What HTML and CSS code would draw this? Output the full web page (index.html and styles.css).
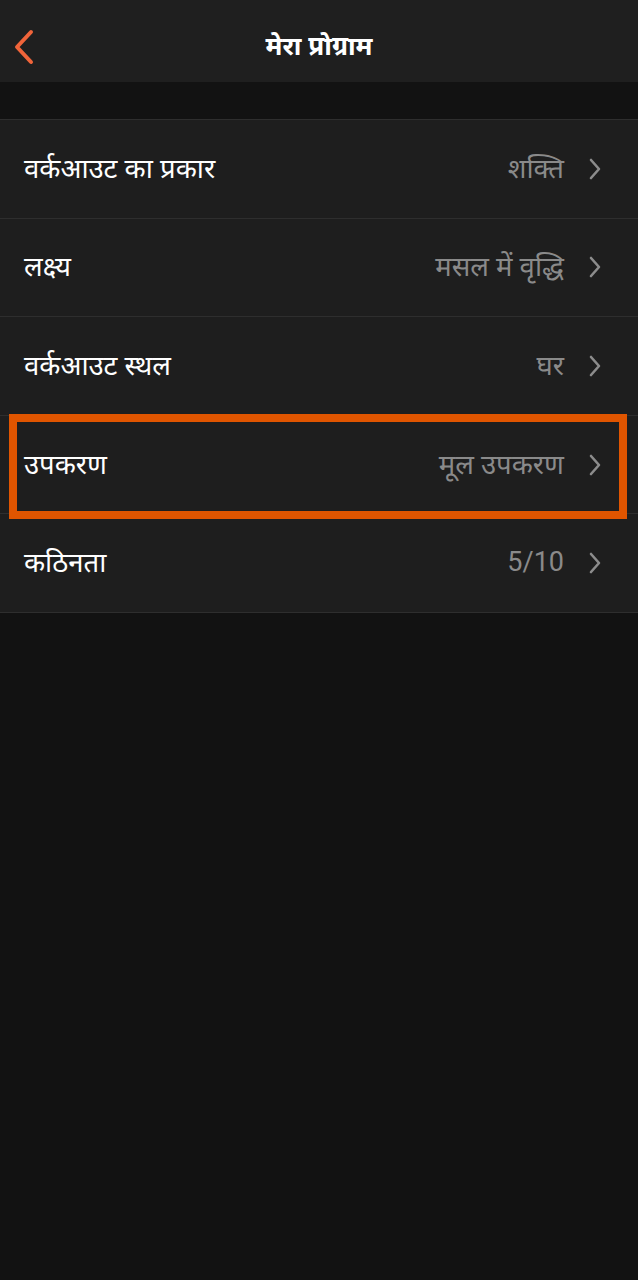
FILE: index.html
```html
<!DOCTYPE html>
<html lang="hi">
<head>
<meta charset="utf-8">
<link rel="stylesheet" href="styles.css">
</head>
<body>
<div class="screen">
  <header class="topbar">
    <span class="back">
      <svg width="22" height="36" viewBox="0 0 22 36"><path d="M18 3 L4 18 L18 33" fill="none" stroke="#f0643a" stroke-width="4" stroke-linecap="round" stroke-linejoin="round"/></svg>
    </span>
    <h1 class="title">मेरा प्रोग्राम</h1>
  </header>
  <div class="spacer"></div>
  <ul class="list">
    <li class="row"><span class="label">वर्कआउट का प्रकार</span><span class="value">शक्ति</span><span class="chev"><svg width="14" height="24" viewBox="0 0 14 24"><path d="M3 3 L11 12 L3 21" fill="none" stroke="#8c8c8c" stroke-width="2.6" stroke-linecap="round" stroke-linejoin="round"/></svg></span></li>
    <li class="row"><span class="label">लक्ष्य</span><span class="value">मसल में वृद्धि</span><span class="chev"><svg width="14" height="24" viewBox="0 0 14 24"><path d="M3 3 L11 12 L3 21" fill="none" stroke="#8c8c8c" stroke-width="2.6" stroke-linecap="round" stroke-linejoin="round"/></svg></span></li>
    <li class="row"><span class="label">वर्कआउट स्थल</span><span class="value">घर</span><span class="chev"><svg width="14" height="24" viewBox="0 0 14 24"><path d="M3 3 L11 12 L3 21" fill="none" stroke="#8c8c8c" stroke-width="2.6" stroke-linecap="round" stroke-linejoin="round"/></svg></span></li>
    <li class="row highlighted"><span class="label">उपकरण</span><span class="value">मूल उपकरण</span><span class="chev"><svg width="14" height="24" viewBox="0 0 14 24"><path d="M3 3 L11 12 L3 21" fill="none" stroke="#8c8c8c" stroke-width="2.6" stroke-linecap="round" stroke-linejoin="round"/></svg></span></li>
    <li class="row"><span class="label">कठिनता</span><span class="value num">5/10</span><span class="chev"><svg width="14" height="24" viewBox="0 0 14 24"><path d="M3 3 L11 12 L3 21" fill="none" stroke="#8c8c8c" stroke-width="2.6" stroke-linecap="round" stroke-linejoin="round"/></svg></span></li>
  </ul>
</div>
</body>
</html>
```

FILE: styles.css
```css
* { box-sizing: border-box; }
html, body { margin: 0; padding: 0; background: #121212; }
body { font-family: "Noto Sans", "Noto Sans Devanagari", "Lohit Devanagari", sans-serif; color: #fff; }
.screen { width: 638px; min-height: 1280px; background: #121212; }
.topbar {
  height: 82px;
  padding-top: 8px;
  background: #1f1f1f;
  display: flex;
  align-items: center;
  justify-content: center;
  position: relative;
}
.back { position: absolute; left: 13px; top: 29px; display: flex; }
.title { margin: 0; font-size: 26px; font-weight: 700; color: #fff; }
.spacer { height: 37px; }
.list { list-style: none; margin: 0; padding: 0; background: #1e1e1e; border-top: 1px solid #2e2e2e; }
.row {
  height: 98.6px;
  display: flex;
  align-items: center;
  padding: 0 36px 3px 24px;
  border-bottom: 1px solid #2e2e2e;
  position: relative;
}
.label { flex: 1; font-size: 27.5px; color: #fff; }
.value { font-size: 27.5px; color: #8a8a8a; margin-right: 24px; }
.value.num { font-family: Roboto, sans-serif; font-size: 27px; }
.chev { display: flex; margin-top: 3px; }
.highlighted::after {
  content: "";
  position: absolute;
  left: 9px; right: 11px; top: -2px; bottom: -6px;
  border: 8px solid #e05500;
  pointer-events: none;
}
```
